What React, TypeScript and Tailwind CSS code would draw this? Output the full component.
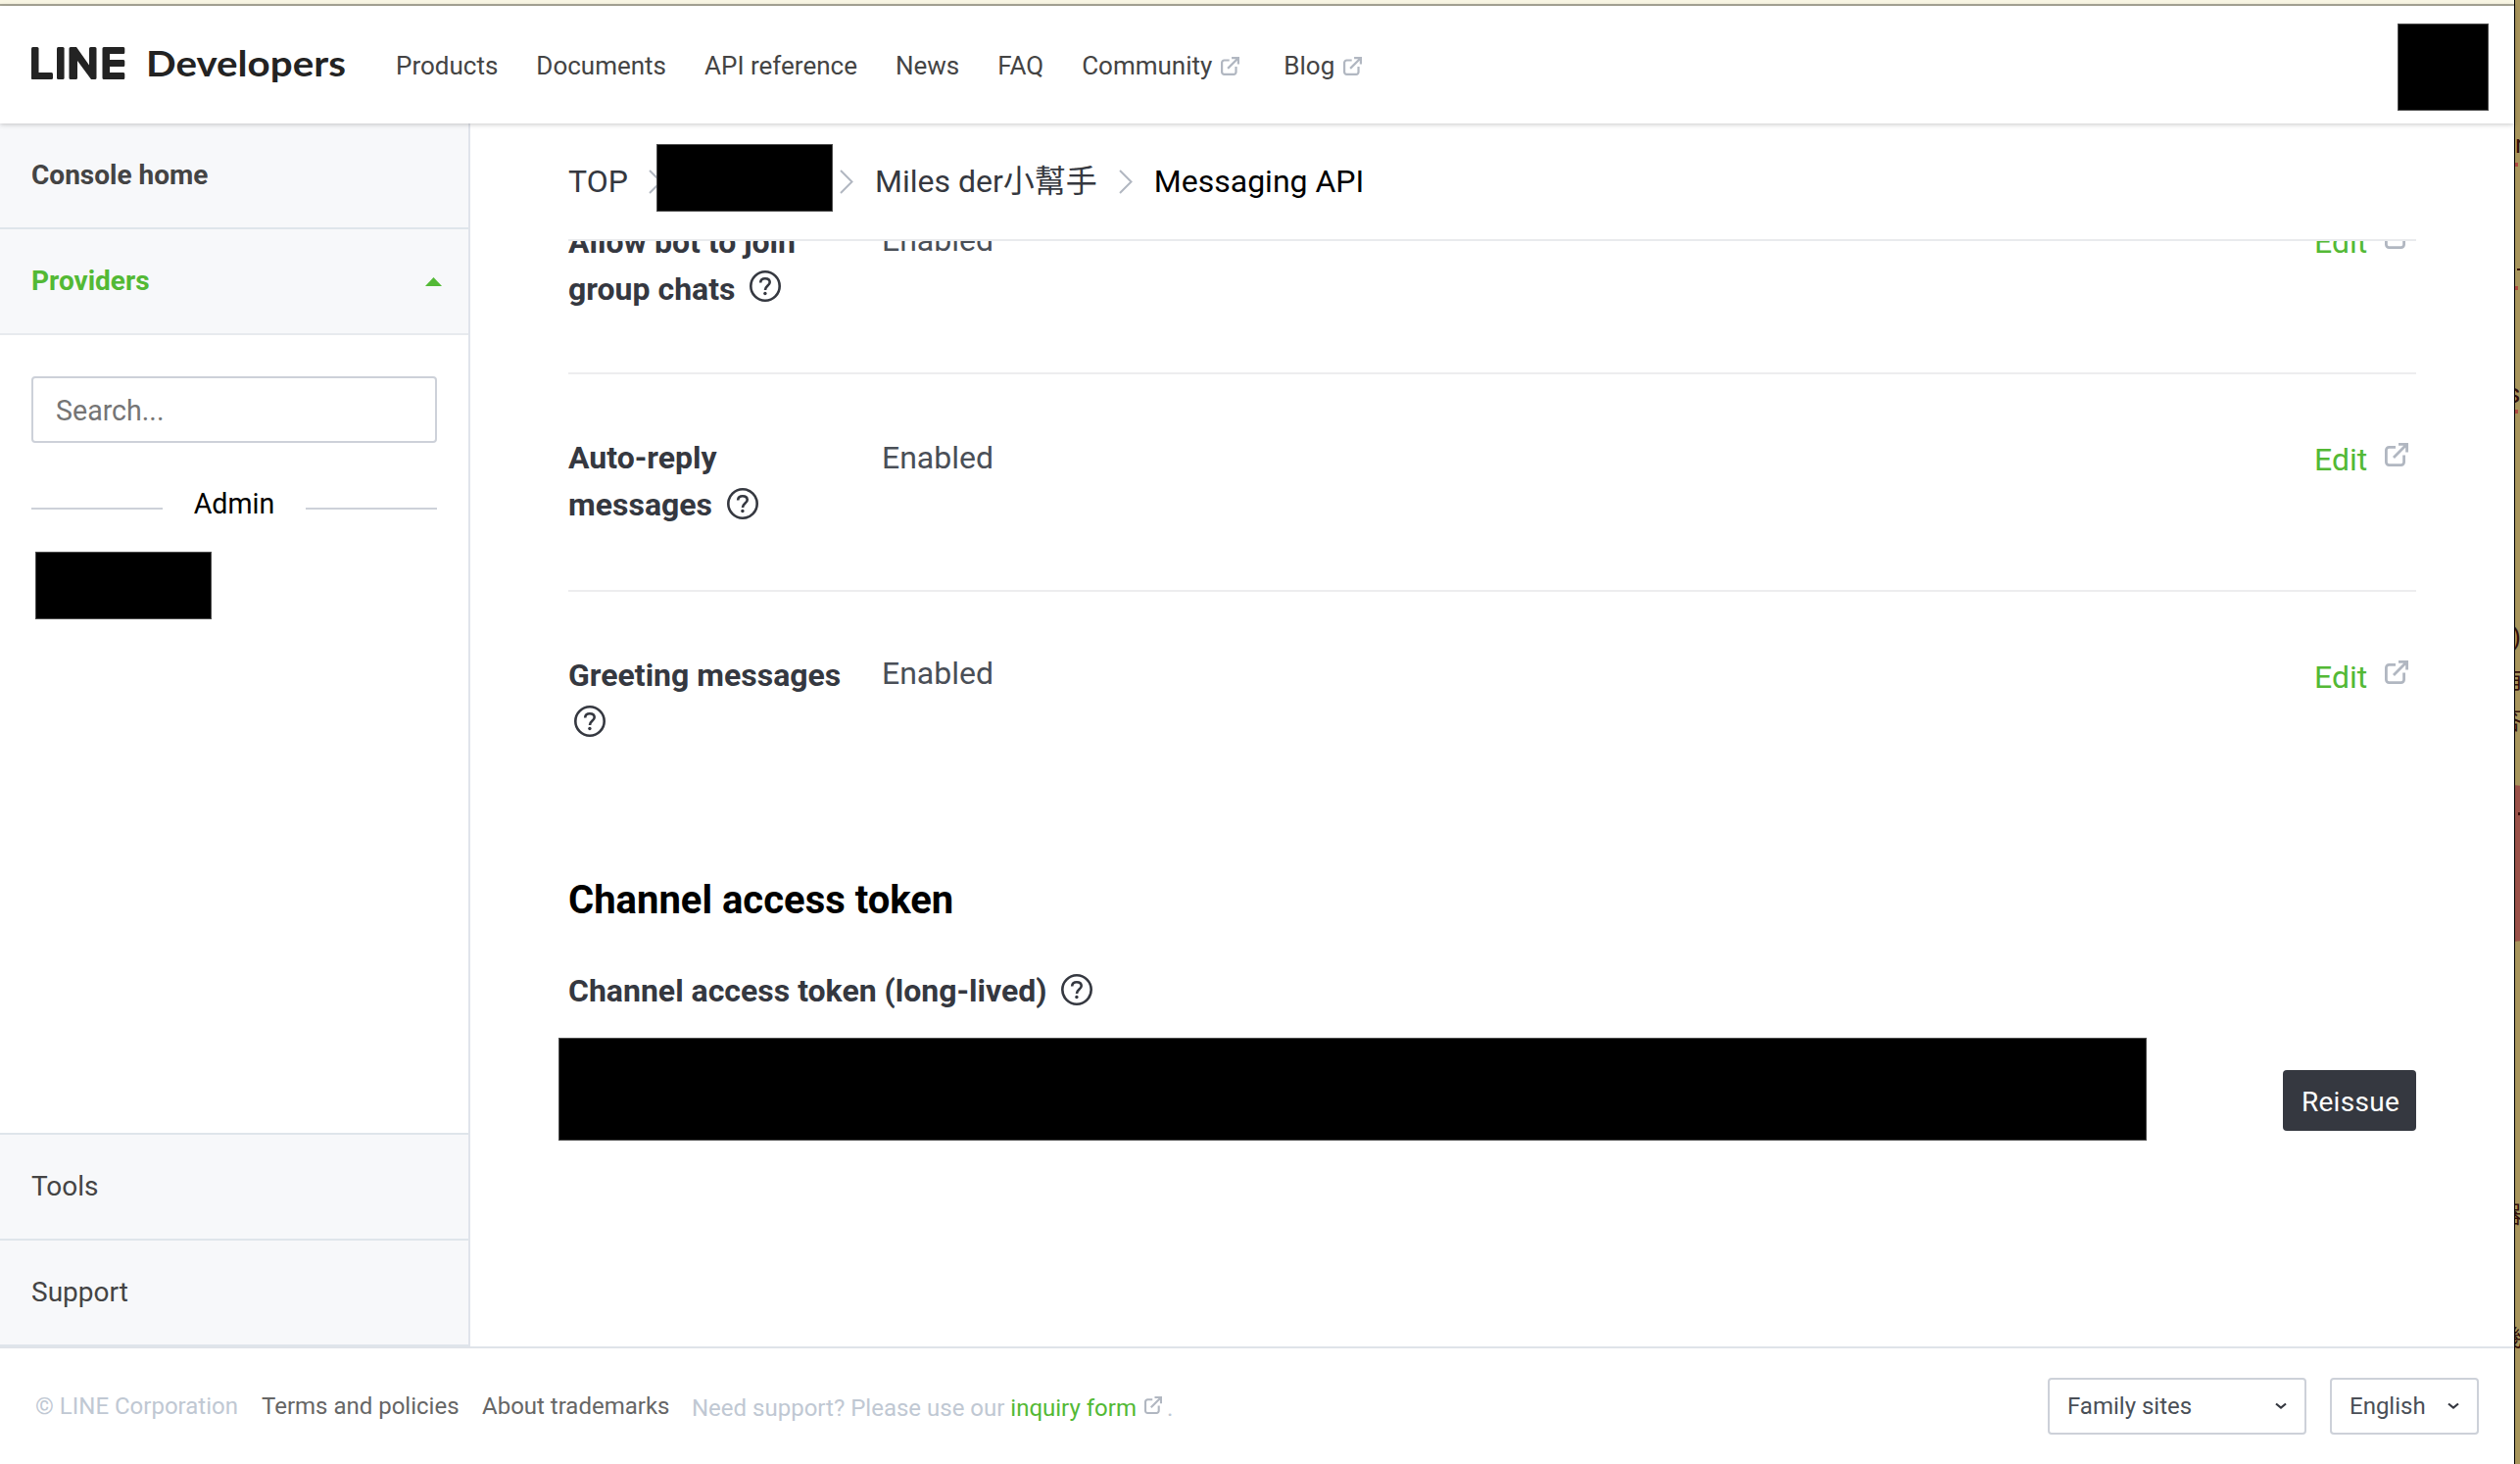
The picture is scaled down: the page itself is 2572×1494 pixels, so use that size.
import React from "react";

const NAV = ["Products", "Documents", "API reference", "News", "FAQ"];

function External({ size, className = "" }: { size: number; className?: string }) {
  return (
    <svg width={size} height={size} viewBox="0 0 24 24" fill="none" stroke="#b1b7c1" strokeWidth="2.8" className={"shrink-0 " + className}>
      <path d="M11 4.400H4.400a3 3 0 0 0-3 3V19.600a3 3 0 0 0 3 3H16.600a3 3 0 0 0 3-3V12.500" />
      <path d="M14 1.400H22.600V9.500M22.400 1.600L9 15" />
    </svg>
  );
}

function Help({ className = "" }: { className?: string }) {
  return (
    <svg width="32" height="32" viewBox="0 0 32 32" fill="none" stroke="#353840" className={"shrink-0 " + className}>
      <circle cx="16" cy="16" r="14.7" strokeWidth="2.6" />
      <path d="M11.200 12.500C11.200 9.800 13 8.200 15.900 8.200C18.900 8.200 20.700 9.800 20.700 12.100C20.700 15.500 16 15.800 16 20" strokeWidth="2.6" />
      <circle cx="15.900" cy="23.500" r="1.700" fill="#353840" stroke="none" />
    </svg>
  );
}

function Chevron({ className = "" }: { className?: string }) {
  return (
    <svg width="14" height="25" viewBox="0 0 14 25" fill="none" stroke="#b1b7c1" strokeWidth="2" className={"shrink-0 " + className}>
      <path d="M1 1L12.500 12.500L1 24" />
    </svg>
  );
}

function Caret() {
  return (
    <svg width="12" height="8" viewBox="0 0 12 8" fill="none" stroke="#353840" strokeWidth="2.200">
      <path d="M1 1.500L6 5.500L11 1.500" />
    </svg>
  );
}

function Redacted({ className }: { className: string }) {
  return <div className={"shrink-0 border border-[#4d4d4d] bg-black " + className} />;
}

function SideItem({ label, className = "" }: { label: string; className?: string }) {
  return <div className={"flex h-[108px] items-center px-8 text-[28px] text-[#444] bg-[#f7f8fa] " + className}>{label}</div>;
}

function Row({ first, second, labelClass = "", helpClass, valueClass = "" }: { first: string; second: string; labelClass?: string; helpClass: string; valueClass?: string }) {
  return (
    <div className="flex h-[222px] items-start border-b-2 border-[#ededef] pt-[61px] text-[32px] leading-[48px] last:border-b-0">
      <div className={"w-[320px] shrink-0 font-bold text-[#353840] " + labelClass}>
        <div className="whitespace-nowrap">{first}</div>
        <div className="flex h-12 items-start">
          {second && <span>{second}</span>}
          <Help className={helpClass} />
        </div>
      </div>
      <div className={"flex-1 text-[#4a4f57] " + valueClass}>Enabled</div>
      <div className="mt-0.5 flex w-[104px] items-start text-[#53b935]">
        Edit
        <External size={24} className="ml-[18px] mt-[7px]" />
      </div>
    </div>
  );
}

export default function App() {
  return (
    <div className="flex h-[1494px] w-[2572px] overflow-hidden bg-white font-[Roboto,'Noto_Sans_CJK_TC',sans-serif]">
      <div className="flex w-[2566px] flex-col">
        <div className="h-1.5 shrink-0 border-b-2 border-[#a9a798] bg-[#f8f5e3]" />
        <header className="relative z-10 flex h-[120px] shrink-0 items-center bg-white pl-8 pr-[26px] text-[26px] text-[#444] shadow-[0_1px_5px_rgba(0,0,0,0.22)]">
          <svg width="96" height="34" viewBox="0 0 96 34" className="mb-[2px] shrink-0" fill="#232323">
            <rect x="0" y="0" width="7.500" height="33" rx="1.500" />
            <rect x="0" y="26" width="22" height="7" rx="1.500" />
            <rect x="26" y="0" width="7.600" height="33" rx="1.500" />
            <path d="M40 0H46L59 18.500V1.500Q59 0 60.500 0H65Q66.500 0 66.500 1.500V31.500Q66.500 33 65 33H61L47 14V31.500Q47 33 45.500 33H40Q38.500 33 38.500 31.500V1.500Q38.500 0 40 0Z" />
            <path d="M74 0H94Q95.300 0 95.300 1.500V5.500Q95.300 7 94 7H80V13H94Q95.300 13 95.300 14.500V18.500Q95.300 20 94 20H80V26H94Q95.300 26 95.300 27.500V31.500Q95.300 33 94 33H74Q72.500 33 72.500 31.500V1.500Q72.500 0 74 0Z" />
          </svg>
          <span className="mb-1 ml-[21px] w-[255px] shrink-0">
            <span className="block origin-left scale-x-[1.12] whitespace-nowrap font-[Lato] text-[36px] font-bold text-[#232323]">Developers</span>
          </span>
          <nav className="flex items-center gap-[39px] pt-0.5">
            {NAV.map((n) => <span key={n} className="whitespace-nowrap">{n}</span>)}
            <span className="flex items-center">Community<External size={19} className="ml-[9px]" /></span>
            <span className="ml-[6px] flex items-center">Blog<External size={19} className="ml-[9px]" /></span>
          </nav>
          <Redacted className="ml-auto mt-[5px] h-[89px] w-[93px]" />
        </header>

        <div className="flex h-[1248px] shrink-0">
          <aside className="flex w-[480px] shrink-0 flex-col border-r-2 border-[#e0e4eb]">
            <SideItem label="Console home" className="border-b-2 border-[#dfe5eb] font-bold" />
            <div className="flex h-[108px] items-center justify-between border-b-2 border-[#e7eaee] bg-[#f7f8fa] pl-8 pr-[27px] text-[28px] font-bold text-[#53b935]">
              Providers
              <svg width="17" height="9" viewBox="0 0 17 9" fill="#53b935"><path d="M8.500 0L17 9H0Z" /></svg>
            </div>
            <div className="flex flex-1 flex-col px-8 pt-[42px]">
              <div className="flex h-[68px] items-center rounded border-2 border-[#cdd1d9] px-[23px] pt-0.5 text-[28.6px] text-[#757575]">Search...</div>
              <div className="mt-[46px] flex h-8 items-center text-[28.6px] text-black">
                <div className="mt-[10px] h-0.5 w-[134px] bg-[#cdd1d9]" />
                <span className="flex-1 text-center">Admin</span>
                <div className="mt-[10px] h-0.5 w-[134px] bg-[#cdd1d9]" />
              </div>
              <Redacted className="ml-1 mt-[33px] h-[69px] w-[180px]" />
            </div>
            <SideItem label="Tools" className="border-t-2 border-[#dfe5eb]" />
            <SideItem label="Support" className="border-t-2 border-[#dfe5eb]" />
            <div className="h-0.5 bg-[#dfe5eb]" />
          </aside>

          <main className="flex flex-1 flex-col overflow-hidden pl-[100px] pr-[100px]">
            <div className="flex h-[120px] shrink-0 items-center border-b-2 border-[#e9ebed] text-[32px] text-[#353840]">
              <span className="w-[82px]">TOP</span>
              <Chevron />
              <Redacted className="-ml-[6px] -mt-[7px] h-[69px] w-[180px]" />
              <Chevron className="ml-[7px]" />
              <span className="ml-[22px] whitespace-nowrap">Miles der小幫手</span>
              <Chevron className="ml-[22px]" />
              <span className="ml-[22px] whitespace-nowrap text-black">Messaging API</span>
            </div>
            <div className="h-[578px] shrink-0 overflow-hidden">
              <div className="-mt-[86px]">
                <Row first="Allow bot to join" second="group chats" labelClass="mt-0.5" helpClass="ml-[15px] mt-[5px]" />
                <Row first="Auto-reply" second="messages" helpClass="ml-[15px] mt-[7px]" />
                <Row first="Greeting messages" second="" helpClass="ml-1.5 mt-[7px]" valueClass="-mt-0.5" />
              </div>
            </div>
            <h2 className="mt-[65px] text-[40px] font-bold leading-[60px] text-black">Channel access token</h2>
            <div className="mt-[38px] flex items-center text-[32px] font-bold leading-[48px] text-[#353840]">
              Channel access token (long-lived)
              <Help className="mb-0.5 ml-[14px]" />
            </div>
            <div className="mt-6 flex items-start justify-between">
              <Redacted className="-ml-[10px] h-[105px] w-[1621px]" />
              <button className="mt-[33px] h-[62px] w-[136px] rounded bg-[#353840] pl-0.5 pt-1 text-[28px] tracking-[0.3px] text-white">Reissue</button>
            </div>
          </main>
        </div>

        <footer className="flex flex-1 items-center border-t-2 border-[#dfe3e9] pl-9 pr-9 text-[24px] text-[#666]">
          <span className="w-[231px] text-[#c0c8d3]">© LINE Corporation</span>
          <span className="w-[225px]">Terms and policies</span>
          <span className="w-[214px]">About trademarks</span>
          <span className="mt-1 flex items-center whitespace-pre text-[#c0c8d3]">
            Need support? Please use our <span className="text-[#53b935]">inquiry form</span>
            <External size={18} className="mb-1.5 ml-2" />
            <span className="ml-[5px]">.</span>
          </span>
          <div className="ml-auto flex gap-6 text-[#4a4f57]">
            <div className="flex h-[58px] w-[264px] items-center justify-between rounded border-2 border-[#cdd1d9] pl-[18px] pr-[18px]">Family sites<Caret /></div>
            <div className="flex h-[58px] w-[152px] items-center justify-between rounded border-2 border-[#cdd1d9] pl-[18px] pr-[18px]">English<Caret /></div>
          </div>
        </footer>
      </div>
      <div className="relative flex-1 overflow-hidden border-l border-black bg-[#a8955c] text-[#36100a]">
        <div className="absolute -left-[85px] top-[801px] size-[160px] rounded-full bg-[#9b5249]" />
        <span className="absolute left-0 top-[133px] text-[26px] leading-[28px]">r</span>
        <div className="absolute left-0 top-[166px] h-1 w-[3px] bg-[#b04a40]" />
        <div className="absolute left-[2px] top-[274px] h-0.5 w-1 bg-[#36100a]" />
        <div className="absolute left-0 top-[292px] h-1 w-[3px] bg-[#b04a40]" />
        <span className="absolute -left-[9px] top-[388px] text-[28px] leading-[28px]">s</span>
        <div className="absolute left-0 top-[418px] h-1 w-[3px] bg-[#b04a40]" />
        <span className="absolute -left-[3px] top-[636px] text-[26px] leading-[28px]">)</span>
        <span className="absolute -left-[15px] top-[680px] text-[24px] leading-[28px]">有</span>
        <span className="absolute -left-[17px] top-[722px] text-[24px] leading-[28px]">答</span>
        <div className="absolute left-[3px] top-[829px] h-[3px] w-0.5 bg-[#36100a]" />
        <span className="absolute -left-[17px] top-[1226px] text-[24px] leading-[28px]">器</span>
        <span className="absolute -left-[17px] top-[1352px] text-[24px] leading-[28px]">幾</span>
      </div>
    </div>
  );
}
